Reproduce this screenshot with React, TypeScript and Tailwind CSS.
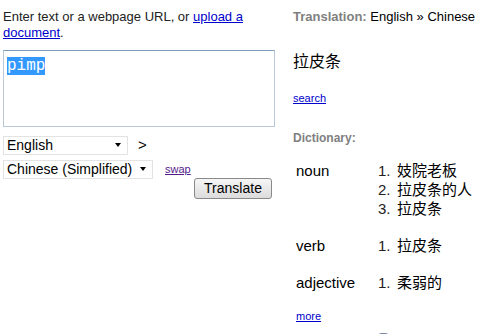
import React from 'react';

const cjk = { fontFamily: "'Liberation Sans', 'Noto Sans CJK SC', sans-serif" };

const entries = [
  { pos: 'noun', terms: ['妓院老板', '拉皮条的人', '拉皮条'] },
  { pos: 'verb', terms: ['拉皮条'] },
  { pos: 'adjective', terms: ['柔弱的'] },
];

function FakeSelect({ label, width }: { label: string; width: string }) {
  return (
    <div
      className={`${width} h-[19px] flex items-center justify-between border border-[#e3e3e3] bg-white pl-[3px] pr-[6px] text-[14px] leading-none text-black`}
    >
      <span>{label}</span>
      <span className="w-0 h-0 border-l-[3.5px] border-r-[3.5px] border-t-[4px] border-l-transparent border-r-transparent border-t-black" />
    </div>
  );
}

export default function App() {
  return (
    <div
      className="w-[502px] h-[334px] overflow-hidden bg-white flex text-black"
      style={{ fontFamily: "'Liberation Sans', Arial, sans-serif" }}
    >
      {/* Left: input */}
      <div className="w-[290px] shrink-0 pl-[3px] pt-[9px]">
        <p className="text-[13px] leading-[16px] text-[#222]">
          Enter text or a webpage URL, or <a className="text-[#0000cc] underline">upload a</a>
          <br />
          <a className="text-[#0000cc] underline">document</a>.
        </p>
        <div className="mt-[9px] w-[272px] h-[77px] border border-[#b9c7d6] border-t-[#7f9db9] px-[3px] pt-[2px]">
          <span
            className="bg-[#3399ff] text-white text-[16px] leading-[18px]"
            style={{ fontFamily: "'Liberation Mono', 'Courier New', monospace" }}
          >
            pimp
          </span>
        </div>
        <div className="mt-[7px] flex items-center">
          <FakeSelect label="English" width="w-[125px]" />
          <span className="ml-[10px] text-[15px]">&gt;</span>
        </div>
        <div className="mt-[3px] flex items-center">
          <FakeSelect label="Chinese (Simplified)" width="w-[150px]" />
          <a className="ml-[12px] text-[11px] text-[#551a8b] underline">swap</a>
        </div>
        <div className="flex justify-end w-[269px] -mt-[1px]">
          <button className="w-[78px] h-[21px] border border-[#8a8a8a] rounded-[3px] bg-gradient-to-b from-[#f6f6f6] to-[#dcdcdc] text-[14px] leading-none text-black">
            Translate
          </button>
        </div>
      </div>

      {/* Right: result */}
      <div className="flex-1 pl-[3px] pt-[9px]">
        <p className="text-[13px] leading-[16px]">
          <span className="font-bold text-[#808080]">Translation:</span> English » Chinese
        </p>
        <p className="mt-[27px] text-[16px] leading-[20px]" style={cjk}>拉皮条</p>
        <a className="block mt-[20px] text-[11px] leading-[13px] text-[#0000cc] underline">search</a>
        <p className="mt-[26px] text-[12px] leading-[15px] font-bold text-[#808080]">Dictionary:</p>
        <div className="mt-[15px] pl-[3px] flex flex-col gap-[18px]">
          {entries.map((e) => (
            <div key={e.pos} className="flex text-[15px] leading-[19px]" style={cjk}>
              <span className="w-[82px] shrink-0">{e.pos}</span>
              <ol className="flex flex-col">
                {e.terms.map((t, i) => (
                  <li key={t} className="flex">
                    <span className="w-[19px] text-[#222]">{i + 1}.</span>
                    <span>{t}</span>
                  </li>
                ))}
              </ol>
            </div>
          ))}
        </div>
        <a className="block mt-[18px] pl-[3px] text-[11px] leading-[13px] text-[#0000cc] underline">more</a>
        <div className="mt-[10px] ml-[85px] w-[11px] h-[11px] rounded-[3px] border border-[#7f8aa6]" />
      </div>
    </div>
  );
}
